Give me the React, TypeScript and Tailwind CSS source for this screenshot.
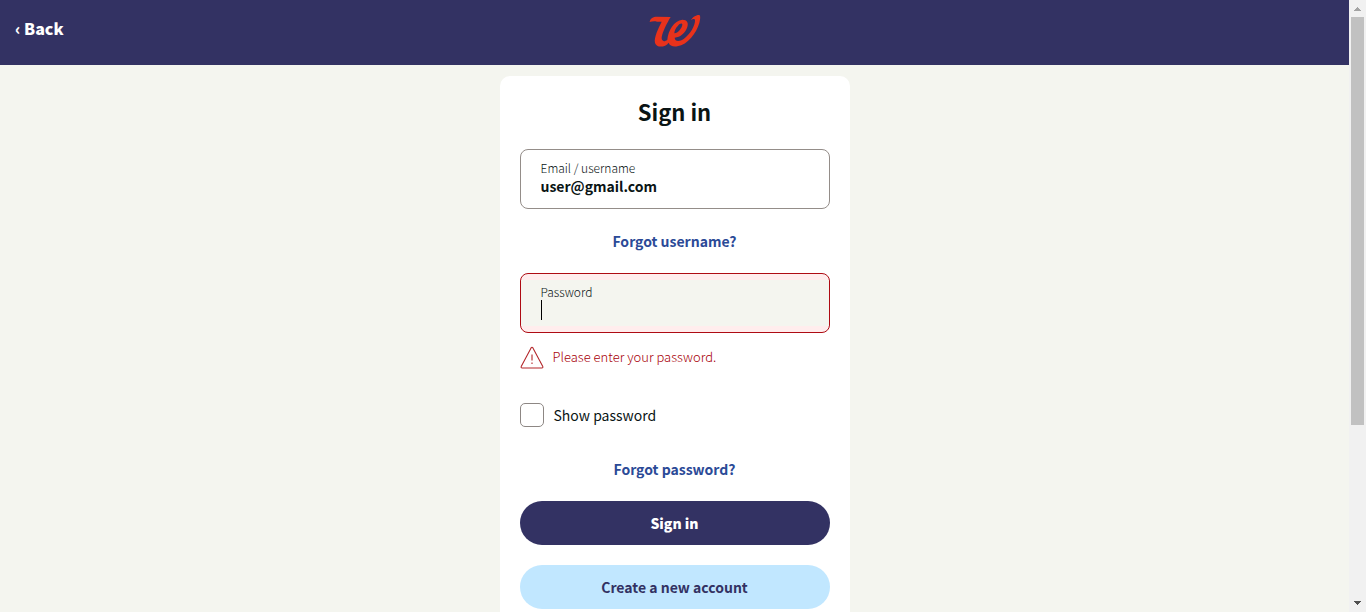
import { useState } from "react";

function Logo() {
  return (
    <svg viewBox="-3 0 210 150" className="h-[50px] w-[70px]" aria-label="Walgreens" role="img">
      <path
        d="M29 51C31 39 39 35 51 35L92 36C81 54 68 80 65 97C64 109 73 112 82 104C84 78 102 46 127 44C142 44 146 54 142 66C137 83 121 97 104 98C105 111 119 110 132 101C151 88 166 61 165 46C164 40 158 42 153 46C157 36 169 29 178 30C182 32 181 43 178 54C169 84 144 119 112 124C98 126 89 122 86 113C76 127 50 130 45 114C41 97 56 68 65 50L51 50C43 48 37 49 29 51ZM103 85C114 84 126 69 127 59C126 53 119 56 114 62C107 69 103 78 103 85Z"
        fill="#e8321b"
        fillRule="evenodd"
      />
    </svg>
  );
}

function WarningIcon() {
  return (
    <svg viewBox="0 0 24 24" className="size-6 shrink-0" fill="none" stroke="#b3262a" aria-hidden="true">
      <path d="M11.2 2.7a1 1 0 0 1 1.6 0L22.8 21.5a1 1 0 0 1-.9 1.5H2.1A1 1 0 0 1 1.2 21.5Z" strokeWidth="1.1" />
      <path d="M12 9.5v6M12 17.5v1.5" strokeWidth="1.1" />
    </svg>
  );
}

function Scrollbar() {
  return (
    <div className="flex w-[17px] shrink-0 flex-col items-center bg-[#f1f1f1]" aria-hidden="true">
      <svg viewBox="0 0 17 17" className="size-[17px] shrink-0" fill="#a3a3a3" shapeRendering="crispEdges">
        <path d="M8 7h1v1h1v1h1v1h1v1H5v-1h1V9h1V8h1z" />
      </svg>
      <div className="h-[408px] w-[13px] bg-[#c1c1c1]" />
      <div className="flex-1" />
      <svg viewBox="0 0 17 17" className="size-[17px] shrink-0" fill="#505050" shapeRendering="crispEdges">
        <path d="M5 6h7v1h-1v1h-1v1H9v1H8V9H7V8H6V7H5z" />
      </svg>
    </div>
  );
}

export default function App() {
  const [email, setEmail] = useState("user@gmail.com");
  const [password, setPassword] = useState("");
  const [show, setShow] = useState(false);

  return (
    <div className="flex h-screen overflow-hidden bg-[#f4f5ef] font-['Noto_Sans_CJK_JP',sans-serif] text-[#0a1414]">
      <div className="min-w-0 flex-1 overflow-hidden">
        <header className="grid h-[65px] grid-cols-3 bg-[#333263] px-[15px]">
          <a href="#" className="mt-4 justify-self-start text-[16px] leading-6 font-black text-white">
            ‹ Back
          </a>
          <div className="mt-[5px] justify-self-center">
            <Logo />
          </div>
        </header>

        <main className="mx-auto mt-[11px] w-full max-w-[350px] rounded-[10px] bg-white px-5 pt-5 pb-10">
          <h1 className="text-center text-[22px] leading-[30px] font-bold">Sign in</h1>
          <form className="mt-[23px] flex flex-col" onSubmit={(e) => e.preventDefault()}>
            <div className="flex h-[60px] flex-col rounded-[8px] border border-[#948d89] px-5 pt-2.5">
              <label htmlFor="email" className="text-[12px] leading-4 font-light">
                Email / username
              </label>
              <input
                id="email"
                type="text"
                value={email}
                onChange={(e) => setEmail(e.target.value)}
                className="h-5 w-full bg-transparent text-[14px] leading-5 font-bold outline-none"
              />
            </div>
            <a href="#" className="mt-5 self-center text-[14px] leading-6 font-bold text-[#2b4a97]">
              Forgot username?
            </a>
            <div className="mt-5 h-[60px] rounded-[8px] border border-[#ae0b13] bg-[#ffeded] py-1.5">
              <div className="flex h-full flex-col bg-[#f4f5ef] px-5 pt-1">
                <label htmlFor="password" className="text-[12px] leading-4 font-light">
                  Password
                </label>
                <div className="flex h-5 items-stretch">
                  <span className="w-px bg-black" />
                  <input
                    id="password"
                    type={show ? "text" : "password"}
                    value={password}
                    onChange={(e) => setPassword(e.target.value)}
                    className="min-w-0 flex-1 bg-transparent text-[14px] font-bold outline-none"
                  />
                </div>
              </div>
            </div>
            <p className="mt-3 flex items-center gap-[9px] text-[13px] leading-6 font-light text-[#a80008]">
              <WarningIcon />
              Please enter your password.
            </p>
            <div className="mt-[34px] flex items-center gap-2.5">
              <input
                id="show"
                type="checkbox"
                checked={show}
                onChange={(e) => setShow(e.target.checked)}
                className="size-6 shrink-0 appearance-none rounded-[5px] border border-[#8d8784] bg-white checked:bg-[#333263]"
              />
              <label htmlFor="show" className="text-[14px] leading-6">
                Show password
              </label>
            </div>
            <a href="#" className="mt-[30px] self-center text-[14px] leading-6 font-bold text-[#2b4a97]">
              Forgot password?
            </a>
            <button type="submit" className="mt-5 h-11 rounded-full bg-[#333263] text-[14px] leading-6 font-black text-white">
              Sign in
            </button>
            <button type="button" className="mt-5 h-11 rounded-full bg-[#c1e7ff] text-[14px] leading-6 font-bold text-[#333263]">
              Create a new account
            </button>
          </form>
        </main>
      </div>
      <Scrollbar />
    </div>
  );
}
